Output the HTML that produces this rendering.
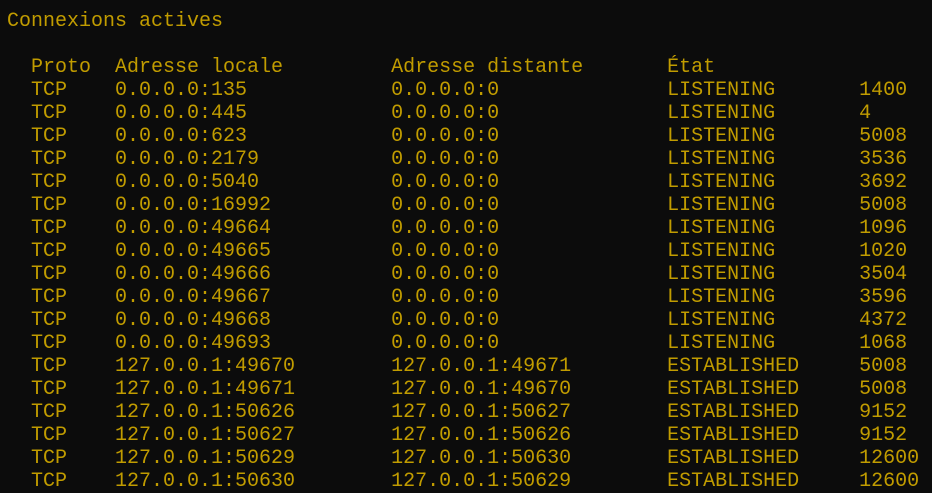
<!DOCTYPE html>
<html><head><meta charset="utf-8"><style>
html,body{margin:0;padding:0;background:#0c0c0c;width:932px;height:493px;overflow:hidden}
pre{margin:0;padding:10px 0 0 7px;font-family:"Liberation Mono",monospace;font-size:20px;line-height:23px;color:#c19c00;white-space:pre}
</style></head><body><pre>Connexions actives

  Proto  Adresse locale         Adresse distante       État
  TCP    0.0.0.0:135            0.0.0.0:0              LISTENING       1400
  TCP    0.0.0.0:445            0.0.0.0:0              LISTENING       4
  TCP    0.0.0.0:623            0.0.0.0:0              LISTENING       5008
  TCP    0.0.0.0:2179           0.0.0.0:0              LISTENING       3536
  TCP    0.0.0.0:5040           0.0.0.0:0              LISTENING       3692
  TCP    0.0.0.0:16992          0.0.0.0:0              LISTENING       5008
  TCP    0.0.0.0:49664          0.0.0.0:0              LISTENING       1096
  TCP    0.0.0.0:49665          0.0.0.0:0              LISTENING       1020
  TCP    0.0.0.0:49666          0.0.0.0:0              LISTENING       3504
  TCP    0.0.0.0:49667          0.0.0.0:0              LISTENING       3596
  TCP    0.0.0.0:49668          0.0.0.0:0              LISTENING       4372
  TCP    0.0.0.0:49693          0.0.0.0:0              LISTENING       1068
  TCP    127.0.0.1:49670        127.0.0.1:49671        ESTABLISHED     5008
  TCP    127.0.0.1:49671        127.0.0.1:49670        ESTABLISHED     5008
  TCP    127.0.0.1:50626        127.0.0.1:50627        ESTABLISHED     9152
  TCP    127.0.0.1:50627        127.0.0.1:50626        ESTABLISHED     9152
  TCP    127.0.0.1:50629        127.0.0.1:50630        ESTABLISHED     12600
  TCP    127.0.0.1:50630        127.0.0.1:50629        ESTABLISHED     12600</pre></body></html>
